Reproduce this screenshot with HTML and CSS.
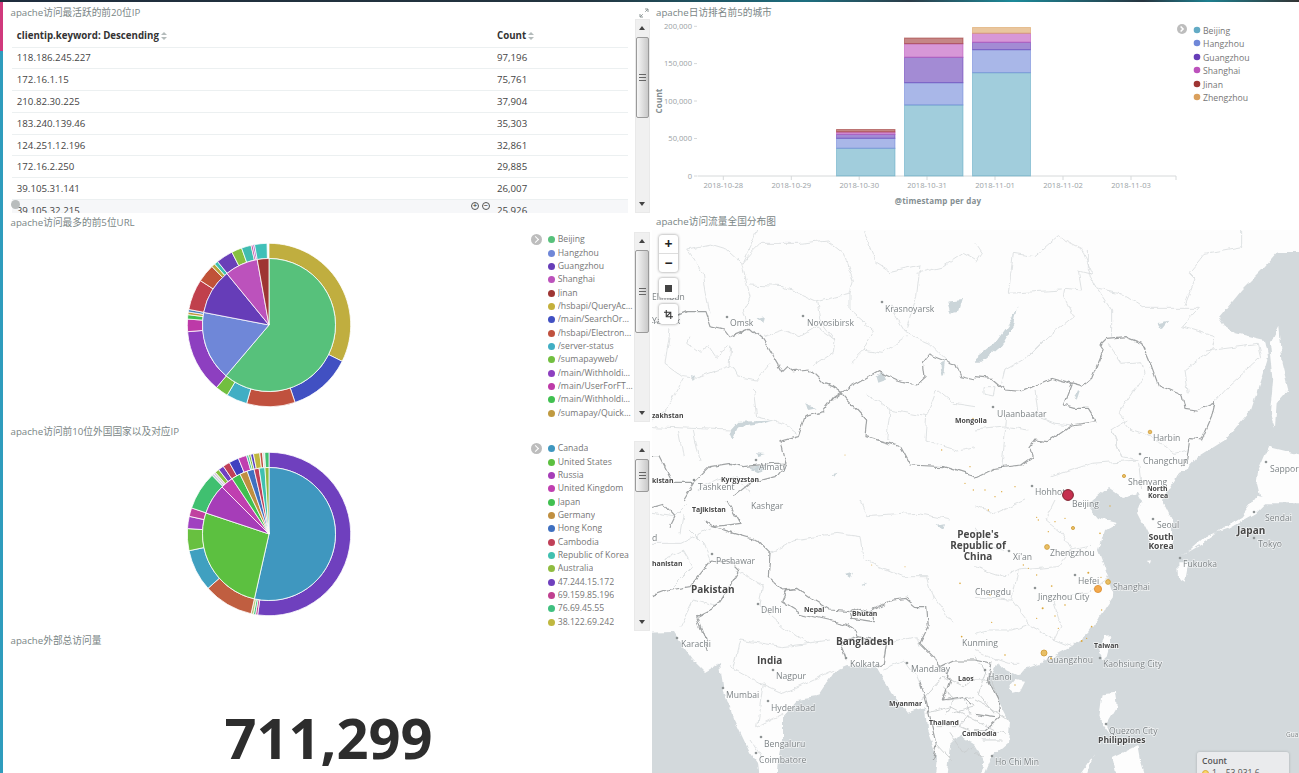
FILE: index.html
```html
<!DOCTYPE html>
<html lang="zh">
<head>
<meta charset="utf-8">
<title>apache dashboard</title>
<link rel="stylesheet" href="styles.css">
</head>
<body>
<div class="topbar"></div>
<div class="main">
  <div class="rail"><div class="rail-top"></div><div class="rail-rest"></div></div>

  <div class="col-left">
    <section class="panel panel-table">
      <header class="title title-table">
        <span>apache访问最活跃的前20位IP</span>
        <svg class="expand" viewBox="0 0 10 10"><path d="M6 1h3v3M9 1L6.3 3.7M1 6v3h3M1 9l2.7-2.7"/></svg>
      </header>
      <div class="table-body">
        <div class="table-view">
          <table class="ip-table">
            <thead><tr><th class="c-ip">clientip.keyword: Descending<i class="sort"></i></th><th>Count<i class="sort"></i></th></tr></thead>
            <tbody>
              <tr><td class="c-ip">118.186.245.227</td><td>97,196</td></tr>
              <tr><td class="c-ip">172.16.1.15</td><td>75,761</td></tr>
              <tr><td class="c-ip">210.82.30.225</td><td>37,904</td></tr>
              <tr><td class="c-ip">183.240.139.46</td><td>35,303</td></tr>
              <tr><td class="c-ip">124.251.12.196</td><td>32,861</td></tr>
              <tr><td class="c-ip">172.16.2.250</td><td>29,885</td></tr>
              <tr><td class="c-ip">39.105.31.141</td><td>26,007</td></tr>
              <tr class="hover"><td class="c-ip">39.105.32.215<span class="cell-tools"><i class="tool">+</i><i class="tool">−</i></span></td><td>25,926</td></tr>
            </tbody>
          </table>
          <span class="spy"></span>
        </div>
        <div class="scroll scroll-table"><i class="up"></i><div class="thumb thumb-table"><b></b></div><i class="down"></i></div>
      </div>
    </section>

    <section class="panel">
      <header class="title">apache访问最多的前5位URL</header>
      <div class="pie-body">
        <div class="pie-wrap"><svg class="pie" id="pie-url" viewBox="-85 -85 170 170"></svg></div>
        <ul class="legend">
          <li class="toggle"></li>
          <li><i class="dot a1"></i><span>Beijing</span></li>
          <li><i class="dot a2"></i><span>Hangzhou</span></li>
          <li><i class="dot a3"></i><span>Guangzhou</span></li>
          <li><i class="dot a4"></i><span>Shanghai</span></li>
          <li><i class="dot a5"></i><span>Jinan</span></li>
          <li><i class="dot a6"></i><span>/hsbapi/QueryAccount</span></li>
          <li><i class="dot a7"></i><span>/main/SearchOrderInfo</span></li>
          <li><i class="dot a8"></i><span>/hsbapi/ElectronicInfo</span></li>
          <li><i class="dot a9"></i><span>/server-status</span></li>
          <li><i class="dot a10"></i><span>/sumapayweb/</span></li>
          <li><i class="dot a11"></i><span>/main/Withholding/pay</span></li>
          <li><i class="dot a12"></i><span>/main/UserForFTPInfo</span></li>
          <li><i class="dot a13"></i><span>/main/Withholding/get</span></li>
          <li><i class="dot a14"></i><span>/sumapay/QuickPayInfo</span></li>
        </ul>
        <div class="scroll"><i class="up"></i><div class="thumb thumb-url"><b></b></div><i class="down"></i></div>
      </div>
    </section>

    <section class="panel">
      <header class="title">apache访问前10位外国国家以及对应IP</header>
      <div class="pie-body">
        <div class="pie-wrap"><svg class="pie" id="pie-country" viewBox="-85 -85 170 170"></svg></div>
        <ul class="legend">
          <li class="toggle"></li>
          <li><i class="dot b1"></i><span>Canada</span></li>
          <li><i class="dot b2"></i><span>United States</span></li>
          <li><i class="dot b3"></i><span>Russia</span></li>
          <li><i class="dot b4"></i><span>United Kingdom</span></li>
          <li><i class="dot b5"></i><span>Japan</span></li>
          <li><i class="dot b6"></i><span>Germany</span></li>
          <li><i class="dot b7"></i><span>Hong Kong</span></li>
          <li><i class="dot b8"></i><span>Cambodia</span></li>
          <li><i class="dot b9"></i><span>Republic of Korea</span></li>
          <li><i class="dot b10"></i><span>Australia</span></li>
          <li><i class="dot b11"></i><span>47.244.15.172</span></li>
          <li><i class="dot b12"></i><span>69.159.85.196</span></li>
          <li><i class="dot b13"></i><span>76.69.45.55</span></li>
          <li><i class="dot b14"></i><span>38.122.69.242</span></li>
        </ul>
        <div class="scroll"><i class="up"></i><div class="thumb thumb-country"><b></b></div><i class="down"></i></div>
      </div>
    </section>

    <section class="panel panel-metric">
      <header class="title">apache外部总访问量</header>
      <div class="metric">711,299</div>
    </section>
  </div>

  <div class="col-right">
    <section class="panel-chart">
      <header class="title title-right">apache日访排名前5的城市</header>
      <svg class="bars" viewBox="652 21 647 191">
        <g class="axis-lines">
          <path d="M697.5 176H1176M723.3 176v4M791.3 176v4M859.2 176v4M927 176v4M995 176v4M1063 176v4M1131 176v4M1176 176v4"/>
          <path d="M697 26.3h-3M697 63.6h-3M697 101h-3M697 138.5h-3M697 176h-3"/>
        </g>
        <g class="ticks-y">
          <text x="692" y="29">200,000</text><text x="692" y="66">150,000</text><text x="692" y="104">100,000</text><text x="692" y="141">50,000</text><text x="692" y="179">0</text>
        </g>
        <g class="ticks-x">
          <text x="723.3" y="188">2018-10-28</text><text x="791.3" y="188">2018-10-29</text><text x="859.2" y="188">2018-10-30</text><text x="927" y="188">2018-10-31</text><text x="995" y="188">2018-11-01</text><text x="1063" y="188">2018-11-02</text><text x="1131" y="188">2018-11-03</text>
        </g>
        <text class="axis-name" x="938" y="204">@timestamp per day</text>
        <text class="axis-name" transform="translate(662 101) rotate(-90)">Count</text>

        <g class="s-beijing"><rect x="836.5" y="148.3" width="58.5" height="27.7"/><rect x="904.5" y="105" width="58.5" height="71"/><rect x="972.5" y="72.7" width="58" height="103.3"/></g>
        <g class="s-hangzhou"><rect x="836.5" y="138.3" width="58.5" height="10"/><rect x="904.5" y="82.7" width="58.5" height="22.3"/><rect x="972.5" y="49.7" width="58" height="23"/></g>
        <g class="s-guangzhou"><rect x="836.5" y="134.3" width="58.5" height="4"/><rect x="904.5" y="57.3" width="58.5" height="25.4"/><rect x="972.5" y="42.3" width="58" height="7.4"/></g>
        <g class="s-shanghai"><rect x="836.5" y="132" width="58.5" height="2.3"/><rect x="904.5" y="43.7" width="58.5" height="13.6"/><rect x="972.5" y="33.3" width="58" height="9"/></g>
        <g class="s-jinan"><rect x="836.5" y="129.5" width="58.5" height="2.5"/><rect x="904.5" y="38" width="58.5" height="5.7"/></g>
        <g class="s-zhengzhou"><rect x="972.5" y="27.5" width="58" height="5.8"/></g>

        <circle class="chev-c" cx="1182" cy="29" r="5"/><path class="chev" d="M1180.6 26.5l2.5 2.5-2.5 2.5"/>
        <g class="chart-legend">
          <circle class="k-beijing" cx="1197" cy="30" r="3.3"/><text x="1203" y="33.5">Beijing</text>
          <circle class="k-hangzhou" cx="1197" cy="43" r="3.3"/><text x="1203" y="46.5">Hangzhou</text>
          <circle class="k-guangzhou" cx="1197" cy="57" r="3.3"/><text x="1203" y="60.5">Guangzhou</text>
          <circle class="k-shanghai" cx="1197" cy="70" r="3.3"/><text x="1203" y="73.5">Shanghai</text>
          <circle class="k-jinan" cx="1197" cy="84" r="3.3"/><text x="1203" y="87.5">Jinan</text>
          <circle class="k-zhengzhou" cx="1197" cy="97" r="3.3"/><text x="1203" y="100.5">Zhengzhou</text>
        </g>
      </svg>
    </section>

    <section class="panel-map">
      <header class="title title-right">apache访问流量全国分布图</header>
      <div class="map">
        <svg class="map-svg" viewBox="652 230 647 543">
          <defs>
            <filter id="rough" filterUnits="userSpaceOnUse" x="630" y="210" width="700" height="590">
              <feTurbulence type="fractalNoise" baseFrequency="0.09" numOctaves="3" seed="4" result="noise"/>
              <feDisplacementMap in="SourceGraphic" in2="noise" scale="6" xChannelSelector="R" yChannelSelector="G"/>
              <feGaussianBlur stdDeviation="0.45"/>
            </filter>
          </defs>
          <g class="geo">
          <!-- seas -->
          <g class="sea">
            <path d="M635 633L673 632L678 640L693 660L705 672L720 663L723 687L733 717L750 753L757 763L760 790H635Z"/>
            <path d="M782 717L797 700L817 697L835 670L847 665L877 668L890 690L907 713L925 707L927 730L937 757L933 790H775L778 760L782 740Z"/>
            <path d="M945 790L950 745L960 735L975 745L985 762L978 790Z"/>
            <path d="M1320 252L1278 252L1265 267L1242 290L1219 318L1224 326L1235 333L1265 340L1268 357L1262 377L1251 410L1225 440L1198 457L1188 468L1180 470L1176 478L1162 500L1172 520L1172 548L1150 550L1148 533L1138 513L1142 500L1138 493L1122 497L1108 487L1092 500L1090 508L1098 518L1117 523L1104 530L1098 550L1108 577L1113 597L1102 613L1088 633L1072 647L1042 663L1022 670L1018 675L1002 668L998 663L988 680L998 700L1010 723L1008 743L992 757L978 790H1320Z"/>
          </g>
          <g class="land">
            <g transform="translate(975 500) scale(.3333)">
              <path d="M620 170L690 110L760 85L840 40L880 0L845 -10L800 50L750 80L680 130L630 160Z"/>
              <path d="M610 190L640 190L630 245L612 235Z"/>
              <path d="M370 450L390 410L412 408L395 470L385 478Z"/>
              <path d="M100 565L120 540L150 545L135 575L110 582Z"/>
              <path d="M380 580L420 575L425 620L395 670L410 705L370 650Z"/>
              <path d="M415 770L490 735L500 790L515 840L430 840Z"/>
              <path d="M305 840L360 760L345 790L330 840Z"/>
              <path d="M515 180L532 178L525 186Z"/>
            </g>
            <g transform="translate(975 230) scale(.3333)">
              <path d="M850 720L880 650L1000 680V820H860L845 760Z"/>
              <path d="M885 340L910 290L920 400L940 480L905 520L900 590L885 550L895 440Z"/>
            </g>
          </g>
          <!-- lakes -->
          <g class="lake">
            <g transform="translate(975 230) scale(.3333)"><path d="M-10 395L60 340L110 270L128 225L115 285L80 345L20 395Z"/><path d="M548 280L580 272L560 298Z"/><path d="M298 490L315 480L305 510Z"/></g>
            <g transform="translate(650 230) scale(.3333)">
              <path d="M238 605L265 575L370 572L330 582L265 592L248 630Z"/><path d="M462 520L500 535L475 540Z"/><path d="M680 440L700 425L708 450L685 458Z"/><path d="M895 215L935 210L925 245L905 250Z"/><path d="M870 400L885 395L878 440Z"/><path d="M320 265L345 258L340 280Z"/><path d="M300 710L350 705L330 725Z"/><path d="M545 733L565 728L555 740Z"/><path d="M320 670L345 672L325 678Z"/><path d="M120 435L135 440L125 450Z"/>
            </g>
            <g transform="translate(650 500) scale(.3333)"><path d="M590 225L612 218L605 235Z"/><path d="M860 75L885 70L880 90Z"/><path d="M635 255L650 248L645 262Z"/></g>
          </g>

          <!-- minor boundaries -->
          <g class="minor">
            <g transform="translate(650 230) scale(.3333)">
              <path d="M320 0L300 50L275 100L290 160L300 200L280 240L290 280M110 60L180 45L230 60L275 100M110 60L160 130L170 200L180 250M275 100L300 70L330 40L450 40L530 30L580 70L610 150L600 190L500 215L400 170L300 165M500 215L510 270L555 330L550 370L490 410M600 190L600 240L670 300L640 360L600 400M340 320L400 300L450 320L500 290L555 330M60 300L45 400L100 440L140 445L240 410L245 350M120 320L110 340L150 370L180 350L200 380L240 350M245 410L260 440L320 450L360 400M310 480L320 560L400 580L440 610M6 590L240 600M85 600L100 680M130 600L150 690M720 230L770 310L840 340L900 400M640 360L700 370L770 320M650 490L720 540L710 630M720 540L830 560L825 630L920 660L975 650M800 130L880 110L940 70L975 90M640 0L680 100L720 125L810 105L800 200L770 290M830 560L860 480L910 520L975 530M6 570L50 540L100 450M140 780L200 750L260 740L300 790"/>
            </g>
            <g transform="translate(975 230) scale(.3333)">
              <path d="M0 40L20 70L0 100M115 70L180 80L250 20L320 55L350 130L310 120L320 180L270 175L265 200L295 260L220 320L160 380L90 420L80 460M100 190L260 180M340 60L340 130L370 180L410 240L410 320M370 175L440 190L510 235L670 235L620 290L720 320L710 360L630 420L640 490M800 0L800 50L690 70L640 130L660 150L630 225M690 360L850 340L860 380L760 470L720 515M400 340L440 400L500 395L510 430L430 550L470 600L530 620L600 670L635 660M180 480L190 560L240 580L290 585M95 560L80 720M0 600L95 590L160 600M410 600L440 680L490 690L500 780M230 740L350 700L490 690M115 70L100 190M440 680L410 600L460 570M30 470L60 470L55 495L30 490Z"/>
            </g>
            <g transform="translate(650 500) scale(.3333)">
              <path d="M360 160L430 120L560 100L630 110L640 180L760 230L830 230L850 300M910 370L850 290M260 210L340 260L330 320L400 380L470 430L540 420M240 500L330 550L400 580L550 510M340 550L320 680L400 640M250 500L270 420L400 440L480 430M300 720L340 780M700 510L760 480L800 530L830 600M630 0L650 50L800 40L900 60M6 40L70 50L110 10M6 130L90 130L190 80M40 180L100 150L130 200L60 270M120 90L160 130L180 180M90 100L100 40M90 380L130 300L200 320M640 410L660 440M720 430L800 410L810 440"/>
              <path class="dense" d="M815 600L880 530L940 560L975 530M830 640L900 620L975 660M860 680L930 680L975 700M900 700L940 760L975 740M880 560L910 600L890 640M940 590L960 640L925 680M850 720L905 780M890 600L975 590M905 640L975 620"/>
            </g>
            <g transform="translate(975 500) scale(.3333)">
              <path d="M0 20L60 40L150 0M0 200L90 230L130 210L250 200L290 150L260 100L210 60L240 0M130 210L110 300L170 380L240 420L260 380L230 290L340 280L400 230M0 80L40 140L100 150M0 400L40 390L110 390L160 375M0 450L40 470L100 490L130 490M290 150L340 140L350 130M240 420L290 440M0 290L100 300L110 300"/>
              <path class="dense" d="M0 470L30 520L10 580L60 640M0 600L40 620L100 660M0 540L50 540L70 600M20 720L80 720M0 660L60 690L90 700M0 760L30 770"/>
            </g>
          </g>

          <!-- national boundaries -->
          <g class="major">
            <g transform="translate(650 230) scale(.3333)">
              <path d="M6 280L60 265L110 245L165 245L180 290L225 300L240 320L300 295L340 330L395 425L410 410L430 425L480 420L520 460L550 470L575 487L625 460L685 425L740 450L800 462L825 440L820 400L840 375L915 405L930 440L975 450"/>
              <path d="M575 487L550 505L520 545L465 560L445 620L390 635L405 700L375 740L300 760L250 800"/>
              <path d="M575 487L650 570L645 620L750 650L780 705L880 710L975 740"/>
              <path d="M6 680L30 680L70 760L130 760L180 710L240 700L280 710L370 700L405 700M130 760L100 810"/>
            </g>
            <g transform="translate(975 230) scale(.3333)">
              <path d="M0 440L50 445L90 480L140 485L230 445L320 470L350 445L385 360L375 345L395 325L450 320L500 340L530 410L550 465L620 495L630 535L665 540L720 515L710 560L680 630L645 625L635 690L615 705"/>
              <path d="M0 745L60 715L140 705L175 680L165 650L180 630L220 635L290 585L365 575L340 535L300 535L265 525L290 460"/>
            </g>
            <g transform="translate(650 500) scale(.3333)">
              <path d="M190 80L250 100L320 120L360 160L355 230L400 270L440 265L490 300L540 330L600 335L640 345L730 300L770 295L800 320L830 320L835 380L810 430L850 470L870 500L910 480L975 480"/>
              <path d="M6 290L60 270L120 260L185 180L250 190L270 210L240 260L200 320L140 350L165 420L175 450"/>
              <path d="M395 305L410 270L440 265M395 305L450 340L470 345L600 375M600 335L620 325L670 340L670 365L605 355Z"/>
              <path d="M590 375L620 395L625 410L710 425L700 490L680 500M590 480L570 430L630 410"/>
              <path d="M810 545L830 610L860 740L850 780M870 500L900 540L880 600L940 590L975 620"/>
              <path d="M6 20L40 10L75 50L60 80M190 80L270 70L230 0M190 80L165 60"/>
            </g>
            <g transform="translate(975 500) scale(.3333)">
              <path d="M0 480L50 490M50 490L40 540L70 600L75 650L30 690L0 690M0 640L60 650"/>
            </g>
          </g>
          </g>

          <g class="labels">
          <!-- city dots -->
          <g class="city">
            <circle cx="727" cy="317" r="1.3"/><circle cx="803" cy="316" r="1.3"/><circle cx="882" cy="302" r="1.3"/><circle cx="756" cy="460" r="1.3"/><circle cx="694" cy="480" r="1.3"/><circle cx="993" cy="407" r="1.3"/><circle cx="1140" cy="454" r="1.3"/><circle cx="1032" cy="486" r="1.3"/><circle cx="1266" cy="462" r="1.3"/><circle cx="1153" cy="519" r="1.3"/><circle cx="1254" cy="512" r="1.3"/><circle cx="1254" cy="538" r="1.3"/><circle cx="1180" cy="558" r="1.3"/><circle cx="1009" cy="551" r="1.3"/><circle cx="1075" cy="575" r="1.3"/><circle cx="1035" cy="588" r="1.3"/><circle cx="1100" cy="658" r="1.3"/><circle cx="985" cy="670" r="1.3"/><circle cx="712" cy="554" r="1.3"/><circle cx="758" cy="604" r="1.3"/><circle cx="677" cy="638" r="1.3"/><circle cx="846" cy="658" r="1.3"/><circle cx="907" cy="663" r="1.3"/><circle cx="773" cy="670" r="1.3"/><circle cx="723" cy="688" r="1.3"/><circle cx="768" cy="701" r="1.3"/><circle cx="761" cy="737" r="1.3"/><circle cx="756" cy="753" r="1.3"/><circle cx="1106" cy="724" r="1.3"/><circle cx="992" cy="756" r="1.3"/>
          </g>

          <!-- labels -->
          <g class="lb">
            <text x="730" y="326">Omsk</text><text x="807" y="326">Novosibirsk</text><text x="885" y="312">Krasnoyarsk</text><text x="759" y="470">Almaty</text><text x="698" y="490">Tashkent</text><text x="997" y="417">Ulaanbaatar</text><text x="1153" y="441">Harbin</text><text x="1143" y="464">Changchun</text><text x="1128" y="485">Shenyang</text><text x="1035" y="495">Hohhot</text><text x="1270" y="472">Sapporo</text><text x="1072" y="507">Beijing</text><text x="1157" y="528">Seoul</text><text x="1265" y="521">Sendai</text><text x="1258" y="547">Tokyo</text><text x="1183" y="567">Fukuoka</text><text x="1050" y="556">Zhengzhou</text><text x="1013" y="560">Xi'an</text><text x="1078" y="584">Hefei</text><text x="1113" y="590">Shanghai</text><text x="975" y="595">Chengdu</text><text x="1038" y="600">Jingzhou City</text><text x="962" y="646">Kunming</text><text x="1047" y="663">Guangzhou</text><text x="1103" y="667">Kaohsiung City</text><text x="988" y="680">Hanoi</text><text x="911" y="672">Mandalay</text><text x="850" y="667">Kolkata</text><text x="761" y="613">Delhi</text><text x="716" y="564">Peshawar</text><text x="681" y="647">Karachi</text><text x="776" y="679">Nagpur</text><text x="726" y="698">Mumbai</text><text x="771" y="711">Hyderabad</text><text x="764" y="747">Bengaluru</text><text x="759" y="763">Coimbatore</text><text x="751" y="509">Kashgar</text><text x="1109" y="734">Quezon City</text><text x="995" y="765">Ho Chi Min</text><text x="652" y="300">Elimbun</text><text x="652" y="324">Yaznak</text><text x="652" y="541">d</text><text x="1286" y="737" class="tiny">Gua</text>
          </g>
          <g class="lb-s">
            <text x="721" y="482">Kyrgyzstan</text><text x="692" y="512">Tajikistan</text><text x="652" y="418">zakhstan</text><text x="652" y="483">kistan</text><text x="652" y="566">hanistan</text><text x="955" y="423">Mongolia</text><text x="1147" y="491">North</text><text x="1148" y="498">Korea</text><text x="1094" y="648">Taiwan</text><text x="958" y="681">Laos</text><text x="962" y="736">Cambodia</text><text x="804" y="612">Nepal</text><text x="852" y="616">Bhutan</text><text x="889" y="706">Myanmar</text><text x="929" y="725">Thailand</text>
          </g>
          <g class="lb-b">
            <text x="691" y="593">Pakistan</text><text x="836" y="645">Bangladesh</text><text x="757" y="664">India</text><text x="1098" y="743" class="mid">Philippines</text><text x="1237" y="534">Japan</text><text x="1161" y="540" class="mid c">South</text><text x="1161" y="549" class="mid c">Korea</text>
            <text x="978" y="538" class="c">People's</text><text x="978" y="549" class="c">Republic of</text><text x="978" y="560" class="c">China</text>
          </g>

          <!-- heat dots -->
          <g class="tiny-dots" transform="translate(975 500) scale(.3333)">
            <circle cx="40" cy="30" r="2"/><circle cx="185" cy="52" r="2"/><circle cx="190" cy="60" r="2"/><circle cx="240" cy="65" r="2"/><circle cx="270" cy="55" r="2"/><circle cx="405" cy="18" r="2"/><circle cx="220" cy="95" r="2"/><circle cx="375" cy="100" r="2.5"/><circle cx="145" cy="195" r="2"/><circle cx="160" cy="205" r="2"/><circle cx="185" cy="225" r="2"/><circle cx="230" cy="258" r="2.5"/><circle cx="270" cy="315" r="2.5"/><circle cx="203" cy="325" r="3"/><circle cx="50" cy="367" r="2"/><circle cx="185" cy="355" r="2"/><circle cx="240" cy="348" r="2"/><circle cx="250" cy="385" r="2"/><circle cx="350" cy="380" r="2.5"/><circle cx="320" cy="423" r="3"/><circle cx="335" cy="415" r="2"/><circle cx="90" cy="465" r="2.5"/><circle cx="228" cy="475" r="3"/><circle cx="120" cy="555" r="2"/><circle cx="380" cy="330" r="2"/><circle cx="378" cy="232" r="2"/><circle cx="340" cy="218" r="3"/><circle cx="45" cy="285" r="2"/><circle cx="-5" cy="-30" r="2"/><circle cx="-100" cy="-150" r="2"/><circle cx="-30" cy="-50" r="2"/><circle cx="-6" cy="-245" r="2"/><circle cx="-15" cy="-100" r="2"/><circle cx="30" cy="-30" r="2"/><circle cx="60" cy="-10" r="2"/><circle cx="80" cy="-25" r="2"/><circle cx="120" cy="-40" r="2"/><circle cx="-390" cy="-135" r="1.5"/><circle cx="-45" cy="250" r="2.5"/><circle cx="-40" cy="410" r="2.5"/><circle cx="-310" cy="195" r="1.5"/><circle cx="-210" cy="200" r="1.5"/>
          </g>
          <g class="heat">
            <circle cx="1150" cy="432" r="1.8"/><circle cx="1124" cy="476" r="1.6"/><circle cx="1073" cy="528" r="1.6"/><circle cx="1047" cy="547" r="2.4"/><circle cx="1108" cy="582" r="2.4"/><circle cx="1044" cy="653" r="3"/>
            <circle class="heat-strong" cx="1098" cy="589" r="3.6"/>
          </g>
          <circle class="heat-top" cx="1068" cy="495" r="5.4"/>
          </g>
        </svg>

        <div class="map-tools">
          <div class="map-btn-group">
            <button class="map-btn" type="button">+</button>
            <button class="map-btn" type="button">−</button>
          </div>
          <button class="map-btn single" type="button"><i class="square"></i></button>
          <button class="map-btn single" type="button">
            <svg class="crop" viewBox="0 0 10 10"><path d="M2.5 0v7.5H10M0 2.5h7.5V10"/><path d="M3 7L7 3"/></svg>
          </button>
        </div>
        <div class="map-legend">
          <div class="map-legend-title">Count</div>
          <div class="map-legend-row"><i></i>1 – 53,931.6</div>
        </div>
      </div>
    </section>
  </div>
</div>
<script src="pie.js"></script>
</body>
</html>
```

FILE: styles.css
```css
* { box-sizing: border-box; }
html, body { margin: 0; padding: 0; height: 773px; overflow: hidden; background: #fff; }
body { font-family: "Open Sans", "Noto Sans CJK SC", sans-serif; color: #333; }

.topbar {
  height: 2px;
  background: linear-gradient(90deg, #1f2d3d 0%, #22343f 45%, #1d6f80 62%, #2b3c48 70%, #1c8a9a 78%, #26343f 88%, #1d7f8f 93%, #333 100%);
}
.main { display: flex; height: 771px; }
.rail { width: 3px; flex: none; display: flex; flex-direction: column; }
.rail-top { height: 49px; background: #d0397c; }
.rail-rest { flex: 1; background: #2f9cbd; }

.col-left { width: 649px; flex: none; padding-right: 2px; display: flex; flex-direction: column; }
.col-right { flex: 1; min-width: 0; display: flex; flex-direction: column; }

.title {
  font-size: 9.7px;
  line-height: 19px;
  height: 19px;
  color: #7a8686;
  padding-left: 7.5px;
  white-space: nowrap;
}
.title-table { height: 22px; padding-top: 1px; display: flex; justify-content: space-between; }
.title-right { height: 18px; padding-left: 4px; line-height: 19px; }
.col-right .panel-chart .title-right { height: 19px; padding-top: 1px; }
.expand { width: 10px; height: 10px; margin: 5px 1px 0 0; fill: none; stroke: #8d9696; stroke-width: 1; }

/* table */
.panel-table { height: 211px; }
.table-body { display: flex; height: 194px; margin-top: -5px; }
.table-view { width: 632px; padding: 6px 6px 0 9.4px; overflow: hidden; position: relative; }
.ip-table { width: 616px; border-collapse: collapse; table-layout: fixed; font-size: 9.7px; color: #444; }
.ip-table th { text-align: left; height: 22px; font-weight: 700; color: #333; border-bottom: 1px solid #ecf0f1; padding: 0; }
.ip-table td { height: 21.8px; border-bottom: 1px solid #ecf0f1; padding: 0; position: relative; }
.ip-table .c-ip { width: 484.6px; padding-left: 4.4px; }
.ip-table .hover td { background: #f6f7f9; }
.sort { display: inline-block; position: relative; width: 6px; height: 8px; margin-left: 2px; vertical-align: -1px; }
.sort::before, .sort::after { content: ""; position: absolute; left: 0; border-left: 3px solid transparent; border-right: 3px solid transparent; }
.sort::before { top: 0; border-bottom: 3.5px solid #b4bbbb; }
.sort::after { bottom: 0; border-top: 3.5px solid #b4bbbb; }
.cell-tools { position: absolute; right: 7px; top: 2px; display: flex; gap: 3px; }
.tool { width: 8px; height: 8px; border-radius: 50%; border: 1.2px solid #555; font-style: normal; font-size: 7px; line-height: 5.5px; text-align: center; color: #555; font-weight: 700; }
.spy { position: absolute; left: 7.5px; top: 181px; width: 9px; height: 9px; border-radius: 50%; background: #b9bdbd; }

/* scrollbars */
.scroll { width: 16px; flex: none; background: #f0f0f0; border: 1px solid #e9e9e9; position: relative; }
.scroll-table { width: 15px; }
.up, .down { position: absolute; left: 50%; margin-left: -3.5px; border-left: 3.5px solid transparent; border-right: 3.5px solid transparent; }
.up { top: 6px; border-bottom: 4px solid #444; }
.down { bottom: 6px; border-top: 4px solid #444; }
.thumb { position: absolute; left: 0; right: 0; border: 1px solid #9a9a9a; border-radius: 2px; background: linear-gradient(90deg, #f6f6f6, #c9c9c9); display: flex; align-items: center; justify-content: center; }
.thumb b { width: 7px; height: 7px; border-top: 1px solid #666; border-bottom: 1px solid #666; position: relative; }
.thumb b::after { content: ""; position: absolute; left: 0; right: 0; top: 2px; border-top: 1px solid #666; }
.thumb-table { top: 17px; height: 81px; }
.thumb-url { top: 17px; height: 83px; }
.thumb-country { top: 17px; height: 33px; }

/* pies */
.panel { flex: none; }
.pie-body { display: flex; height: 190px; }
.pie-wrap { width: 532px; flex: none; padding-top: 8px; display: flex; justify-content: center; align-items: flex-start; }
.pie { width: 170px; height: 170px; display: block; }
.pie path { stroke: #fff; stroke-width: .8; }
.legend { list-style: none; margin: 0; padding: 1.2px 0 0 12.5px; width: 99px; flex: none; position: relative; font-size: 8.7px; color: #767676; }
.legend li { height: 13.35px; line-height: 13.35px; display: flex; align-items: center; gap: 3.2px; white-space: nowrap; }
.legend li span { overflow: hidden; text-overflow: ellipsis; min-width: 0; max-width: 75px; }
.legend .toggle { position: absolute; left: -4.5px; top: 2px; width: 11px; height: 11px; border-radius: 50%; background: #bdbdbd; }
.legend .toggle::after { content: ""; position: absolute; left: 2.5px; top: 3px; width: 4px; height: 4px; border-top: 1.5px solid #fff; border-right: 1.5px solid #fff; transform: rotate(45deg); }
.dot { width: 7px; height: 7px; border-radius: 50%; flex: none; }
.a1 { background: #57c17b; } .a2 { background: #6f87d8; } .a3 { background: #663db8; } .a4 { background: #bc52bc; } .a5 { background: #9e3533; } .a6 { background: #c4b03c; } .a7 { background: #4150c2; } .a8 { background: #c0513e; } .a9 { background: #41aec4; } .a10 { background: #72bf40; } .a11 { background: #8d3fc0; } .a12 { background: #bd3aa8; } .a13 { background: #40c050; } .a14 { background: #c09a40; }
.b1 { background: #3f97bf; } .b2 { background: #5cc040; } .b3 { background: #a63db8; } .b4 { background: #c03fb0; } .b5 { background: #40c050; } .b6 { background: #c08f40; } .b7 { background: #3f70c0; } .b8 { background: #c04058; } .b9 { background: #40c0b0; } .b10 { background: #90bc40; } .b11 { background: #6f40be; } .b12 { background: #c04090; } .b13 { background: #40c080; } .b14 { background: #c0b840; }

/* metric */
.panel-metric { flex: 1; overflow: hidden; }
.metric { font-size: 56px; line-height: 60px; font-weight: 700; color: #2d2d2d; text-align: center; padding: 57px 0 0 4px; }

/* bar chart */
.bars { display: block; width: 647px; height: 191px; }
.bars text { font-family: "Open Sans", sans-serif; }
.axis-lines path { stroke: #d6d9da; stroke-width: 1; fill: none; }
.ticks-y text { font-size: 7.6px; fill: #9aa2a5; text-anchor: end; }
.ticks-x text { font-size: 7.6px; fill: #9aa2a5; text-anchor: middle; }
.bars .axis-name { font-size: 8px; font-weight: 700; fill: #848e92; text-anchor: middle; letter-spacing: .2px; }
.s-beijing rect { fill: #63abc5; stroke: #63abc5; }
.s-hangzhou rect { fill: #6f87d8; stroke: #6f87d8; }
.s-guangzhou rect { fill: #663db8; stroke: #663db8; }
.s-shanghai rect { fill: #bc52bc; stroke: #bc52bc; }
.s-jinan rect { fill: #9e3533; stroke: #9e3533; }
.s-zhengzhou rect { fill: #daa05d; stroke: #daa05d; }
.bars rect { fill-opacity: .6; stroke-opacity: .55; stroke-width: 1; }
.chev-c { fill: #bdbdbd; }
.chev { fill: none; stroke: #fff; stroke-width: 1.5; }
.chart-legend text { font-size: 8.7px; fill: #767676; }
.k-beijing { fill: #63abc5; } .k-hangzhou { fill: #6f87d8; } .k-guangzhou { fill: #663db8; } .k-shanghai { fill: #bc52bc; } .k-jinan { fill: #9e3533; } .k-zhengzhou { fill: #daa05d; }

/* map */
.panel-map { flex: 1; min-height: 0; display: flex; flex-direction: column; }
.map { flex: 1; position: relative; overflow: hidden; background: #fdfdfd; }
.map-svg { display: block; width: 647px; height: 543px; }
.map-svg text { font-family: "Open Sans", "Noto Sans", sans-serif; }
.geo { filter: url(#rough); }
.labels { filter: blur(.3px); }
.sea path { fill: #d3d9dc; }
.land path { fill: #fdfdfd; }
.lake path { fill: #cbd5d9; }
.minor path { fill: none; stroke: #dadddf; stroke-width: 2.6; }
.minor .dense { stroke: #c9cccd; }
.major path { fill: none; stroke: #a0a3a4; stroke-width: 3.6; stroke-linejoin: round; }
.city circle { fill: #8f9495; }
.lb text { font-size: 8.6px; fill: #7d8386; stroke: rgba(255,255,255,.6); stroke-width: 1.5px; paint-order: stroke; }
.lb .tiny { font-size: 6.5px; }
.lb-s text { font-size: 6.9px; font-weight: 700; fill: #454545; stroke: rgba(255,255,255,.7); stroke-width: 1.5px; paint-order: stroke; }
.lb-b text { font-size: 10px; font-weight: 700; fill: #484848; stroke: rgba(255,255,255,.7); stroke-width: 1.5px; paint-order: stroke; }
.lb-b .mid { font-size: 8.6px; }
.lb-b .c { text-anchor: middle; }
.tiny-dots circle { fill: #dca83c; }
.heat circle { fill: #e8bf66; stroke: #cf9a35; stroke-width: .8; }
.heat .heat-strong { fill: #f3a94d; stroke: #dc8c2c; }
.heat-top { fill: #c5304f; stroke: #7d1f2c; stroke-width: 1; }

.map-tools { position: absolute; left: 7px; top: 5px; display: flex; flex-direction: column; gap: 6px; width: 19px; }
.map-btn-group { display: flex; flex-direction: column; background: #fff; border-radius: 3px; box-shadow: 0 0 3px rgba(0,0,0,.45); }
.map-btn { width: 19px; height: 18.5px; padding: 0; border: 0; background: transparent; font: 700 14px/18px "Open Sans", sans-serif; color: #222; display: flex; align-items: center; justify-content: center; }
.map-btn:first-child { border-bottom: 1px solid #ddd; }
.map-btn.single { height: 20px; background: #fff; border-radius: 3px; box-shadow: 0 0 3px rgba(0,0,0,.45); border-bottom: 0; }
.square { width: 7px; height: 7px; background: #444; display: block; }
.crop { width: 9px; height: 9px; fill: none; stroke: #333; stroke-width: 1.2; }
.map-legend { position: absolute; left: 545px; top: 522px; width: 92px; height: 40px; background: rgba(235,237,238,.92); border-radius: 3px 3px 0 0; padding: 2px 5px; font-size: 8.6px; color: #555; box-shadow: 0 0 3px rgba(0,0,0,.2); }
.map-legend-title { font-weight: 600; line-height: 14px; }
.map-legend-row { display: flex; align-items: center; gap: 3px; line-height: 10px; white-space: nowrap; }
.map-legend-row i { width: 7px; height: 7px; border-radius: 50%; background: #fbd866; border: 1px solid #dca83c; }
```

FILE: pie.js
```js
// Draws the two-ring pies. Every slice is [start angle, end angle, colour],
// angles in degrees clockwise from twelve o'clock.
(function () {
  var NS = "http://www.w3.org/2000/svg";
  var INNER = 66.5, OUTER = 81.7;

  var url = {
    inner: [[0,220.3,"#57c17b"],[220.3,280.9,"#6f87d8"],[280.9,320.7,"#663db8"],[320.7,349.8,"#bc52bc"],[349.8,360,"#9e3533"]],
    outer: [[0,116.4,"#c0ae3f"],[116.4,161.4,"#4150c2"],[161.4,195.9,"#c0513e"],[195.9,210.8,"#41aec4"],[210.8,220,"#72bf40"],[220,265.3,"#8d3fc0"],[265.3,274.2,"#bd3aa8"],[274.2,277.3,"#40c050"],[277.3,279.2,"#c09a40"],[279.2,281,"#4a7fc0"],[281,302.9,"#c0404c"],[302.9,315.7,"#c05238"],[315.7,318.3,"#b8a63c"],[318.3,321,"#40c0b0"],[321,333,"#6a40b8"],[333,340.4,"#88c040"],[340.4,347.3,"#40bcb0"],[347.3,348.6,"#c04090"],[348.6,349.8,"#a040c0"],[349.8,358.6,"#40c0b8"]]
  };

  var country = {
    inner: [[0,192.7,"#3f97bf"],[192.7,288.4,"#5cc040"],[288.4,315,"#a63db8"],[315,326.3,"#c03fb0"],[326.3,334.2,"#40c050"],[334.2,340.9,"#c08f40"],[340.9,347,"#3f70c0"],[347,351.4,"#c04058"],[351.4,356.5,"#40c0b0"],[356.5,360,"#90bc40"]],
    outer: [[0,188,"#6f40be"],[188,189.5,"#c04090"],[189.5,191,"#40c080"],[191,192.7,"#b8c878"],[192.7,228.3,"#c05e40"],[228.3,258.2,"#40a0c0"],[258.2,273.8,"#68c040"],[273.8,282.5,"#a040c0"],[282.5,288.6,"#c040a0"],[288.6,315.9,"#40c070"],[315.9,317.5,"#c8cfe0"],[317.5,319,"#d8c8d8"],[319,322,"#88c040"],[322,326,"#7040c0"],[326,331,"#c04058"],[331,338,"#4040c0"],[338,344,"#c040b0"],[344,345.5,"#40c0a0"],[345.5,347,"#80c040"],[347,349,"#5840c0"],[349,353.5,"#c0b840"],[353.5,355.5,"#c05040"],[355.5,357,"#d0e0d8"],[357,360,"#40c070"]]
  };

  function point(r, deg) {
    var a = deg * Math.PI / 180;
    return (r * Math.sin(a)).toFixed(2) + " " + (-r * Math.cos(a)).toFixed(2);
  }

  function slice(r0, r1, from, to) {
    var large = to - from > 180 ? 1 : 0;
    var d = "M" + point(r1, from) + "A" + r1 + " " + r1 + " 0 " + large + " 1 " + point(r1, to);
    if (r0 > 0) {
      d += "L" + point(r0, to) + "A" + r0 + " " + r0 + " 0 " + large + " 0 " + point(r0, from);
    } else {
      d += "L0 0";
    }
    return d + "Z";
  }

  function draw(id, data) {
    var svg = document.getElementById(id);
    function add(list, r0, r1) {
      list.forEach(function (s) {
        var p = document.createElementNS(NS, "path");
        p.setAttribute("d", slice(r0, r1, s[0], s[1]));
        p.setAttribute("fill", s[2]);
        svg.appendChild(p);
      });
    }
    add(data.outer, INNER, OUTER);
    add(data.inner, 0, INNER);
  }

  draw("pie-url", url);
  draw("pie-country", country);
})();
```
